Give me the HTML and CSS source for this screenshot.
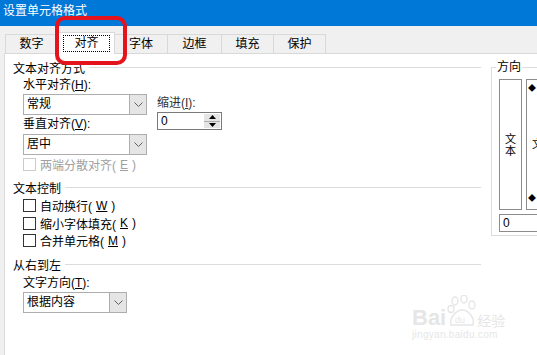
FILE: index.html
```html
<!DOCTYPE html>
<html lang="zh-CN">
<head>
  <meta charset="UTF-8">
  <title>设置单元格格式</title>
  <link rel="stylesheet" href="styles.css">
</head>
<body>
  <div class="dialog">
    <!-- 标题栏 -->
    <div class="titlebar">设置单元格格式</div>

    <!-- 选项卡 -->
    <div class="tabs">
      <div class="tab w53">数字</div>
      <div class="tab active w57"><span class="focus">对齐</span></div>
      <div class="tab w53">字体</div>
      <div class="tab w54">边框</div>
      <div class="tab w52">填充</div>
      <div class="tab w52">保护</div>
    </div>

    <div class="panel">
      <div class="left">
        <div class="section">文本对齐方式</div>
        <div class="align-row">
          <div class="col-main">
            <div class="label">水平对齐(<u>H</u>):</div>
            <div class="combo w124"><span class="combo-text">常规</span><span class="combo-btn"><svg width="9" height="5" viewBox="0 0 9 5"><polyline points="0.5,0.5 4.5,4.5 8.5,0.5" fill="none" stroke="#606060"/></svg></span></div>
            <div class="label">垂直对齐(<u>V</u>):</div>
            <div class="combo w124"><span class="combo-text">居中</span><span class="combo-btn"><svg width="9" height="5" viewBox="0 0 9 5"><polyline points="0.5,0.5 4.5,4.5 8.5,0.5" fill="none" stroke="#606060"/></svg></span></div>
            <div class="check disabled"><span class="box"></span>两端分散对齐(<u>E</u>)</div>
          </div>
          <div class="col-indent">
            <div class="label gray">缩进(<u>I</u>):</div>
            <div class="spin">
              <span class="spin-text">0</span>
              <span class="spin-btns">
                <span class="spin-btn"><svg width="7" height="4" viewBox="0 0 7 4"><polygon points="0,4 3.5,0 7,4" fill="#000"/></svg></span>
                <span class="spin-btn"><svg width="7" height="4" viewBox="0 0 7 4"><polygon points="0,0 3.5,4 7,0" fill="#000"/></svg></span>
              </span>
            </div>
          </div>
        </div>

        <div class="section mt3">文本控制</div>
        <div class="checks">
          <div class="check"><span class="box"></span>自动换行(<u>W</u>)</div>
          <div class="check"><span class="box"></span>缩小字体填充(<u>K</u>)</div>
          <div class="check"><span class="box"></span>合并单元格(<u>M</u>)</div>
        </div>

        <div class="section mt5">从右到左</div>
        <div class="indent">
          <div class="label">文字方向(<u>T</u>):</div>
          <div class="combo w104"><span class="combo-text">根据内容</span><span class="combo-btn"><svg width="9" height="5" viewBox="0 0 9 5"><polyline points="0.5,0.5 4.5,4.5 8.5,0.5" fill="none" stroke="#606060"/></svg></span></div>
        </div>
      </div>

      <fieldset class="orient">
        <legend>方向</legend>
        <div class="orient-boxes">
          <div class="vbox">文<br>本</div>
          <div class="dial">
            <span class="dot top">◆</span>
            <span class="dial-text">文</span>
            <span class="dot bottom">◆</span>
          </div>
        </div>
        <div class="deg">0</div>
      </fieldset>
    </div>

    <!-- 标注 -->
    <div class="mark"></div>

    <!-- 水印 -->
    <div class="watermark">
      <div class="wm-top">
        <span class="wm-bai">Bai</span>
        <span class="wm-paw">
          <svg width="30" height="34" viewBox="0 0 30 34">
            <g fill="none" stroke="#e6e6e6" stroke-width="1.4">
              <ellipse cx="8" cy="6" rx="3" ry="4"/>
              <ellipse cx="17" cy="4" rx="3" ry="4"/>
              <ellipse cx="25" cy="10" rx="3" ry="4"/>
              <ellipse cx="4" cy="14" rx="3" ry="3.5"/>
              <path d="M4 30 C2 22 10 15 15 15 C21 15 28 22 26 30 Z"/>
            </g>
            <text x="8" y="28" font-size="9" fill="#e6e6e6" font-family="Liberation Sans, sans-serif">du</text>
          </svg>
        </span>
        <span class="wm-jy">经验</span>
      </div>
      <div class="wm-url">jingyan.baidu.com</div>
    </div>
  </div>
</body>
</html>
```

FILE: styles.css
```css
* {
  margin: 0;
  padding: 0;
  box-sizing: border-box;
}

body {
  width: 537px;
  height: 355px;
  overflow: hidden;
  font-family: "Liberation Sans", "Noto Sans CJK SC", sans-serif;
  font-size: 12px;
  color: #000;
  background: #f0f0f0;
}

u {
  text-decoration: underline;
}

.dialog {
  position: relative;
  width: 537px;
  height: 355px;
  overflow: hidden;
}

/* 标题栏 */
.titlebar {
  height: 26px;
  background: #0078d7;
  color: #fff;
  padding-left: 3px;
  line-height: 22px;
}

/* 选项卡 */
.tabs {
  display: flex;
  align-items: flex-end;
  height: 27px;
  padding-left: 5px;
  background: #f0f0f0;
}

.tab {
  height: 19px;
  line-height: 18px;
  text-align: center;
  border: 1px solid #d9d9d9;
  border-bottom: none;
  border-left: none;
  background: #f0f0f0;
}

.tab:first-child {
  border-left: 1px solid #d9d9d9;
}

.tab.active {
  height: 22px;
  margin-bottom: -1px;
  background: #fff;
  border-left: 1px solid #d9d9d9;
  position: relative;
  z-index: 1;
  padding-top: 2px;
}

.focus {
  display: block;
  margin: 0 4px;
  height: 17px;
  line-height: 15px;
  border: 1px dotted #000;
}

.w52 { width: 52px; }
.w53 { width: 53px; }
.w54 { width: 54px; }
.w57 { width: 57px; }

/* 面板 */
.panel {
  display: flex;
  gap: 10px;
  height: 302px;
  margin-left: 4px;
  padding: 3px 0 0 8px;
  background: #fff;
  border-top: 1px solid #d9d9d9;
  border-left: 1px solid #d9d9d9;
}

.left {
  width: 468px;
  flex-shrink: 0;
}

.section {
  display: flex;
  align-items: center;
  height: 20px;
  gap: 4px;
}

.section::after {
  content: "";
  flex: 1;
  border-top: 1px solid #dcdcdc;
}

.mt3 { margin-top: 3px; }
.mt5 { margin-top: 5px; }

.align-row {
  display: flex;
  gap: 10px;
  padding-left: 10px;
}

.col-main {
  display: flex;
  flex-direction: column;
}

.col-indent {
  padding-top: 18px;
}

.label {
  height: 17px;
  line-height: 17px;
}

.label.gray {
  color: #333;
}

.col-main .label + .combo + .label {
  height: 19px;
  line-height: 19px;
}

/* 下拉框 */
.combo {
  display: flex;
  height: 21px;
  border: 1px solid #adadad;
  background: #fff;
}

.w124 { width: 124px; }
.w104 { width: 104px; }

.combo-text {
  flex: 1;
  padding-left: 3px;
  line-height: 19px;
}

.combo-btn {
  width: 17px;
  display: flex;
  align-items: center;
  justify-content: center;
  background: #e5e5e5;
  border-left: 1px solid #adadad;
}

/* 微调框 */
.spin {
  display: flex;
  width: 65px;
  height: 18px;
  border: 1px solid #7a7a7a;
  background: #fff;
}

.spin-text {
  flex: 1;
  padding-left: 3px;
  line-height: 16px;
}

.spin-btns {
  width: 16px;
  display: flex;
  flex-direction: column;
  margin: 1px;
}

.spin-btn {
  flex: 1;
  display: flex;
  align-items: center;
  justify-content: center;
  background: #e5e5e5;
}

.spin-btn + .spin-btn {
  border-top: 1px solid #adadad;
}

/* 复选框 */
.check {
  display: flex;
  align-items: center;
  height: 19px;
  gap: 4px;
}

.checks {
  padding-left: 10px;
}

.checks .check {
  height: 17.5px;
}

.box {
  width: 13px;
  height: 13px;
  border: 1px solid #333;
  background: #fff;
}

.check.disabled {
  color: #a0a0a0;
}

.check.disabled .box {
  border-color: #cccccc;
}

.indent {
  padding-left: 10px;
}

/* 方向 */
.orient {
  flex-shrink: 0;
  width: 120px;
  height: 176px;
  margin-top: 3px;
  padding: 5px 0 0 7px;
  border: 1px solid #dcdcdc;
}

.orient legend {
  margin-left: -3px;
  padding: 0 1px;
  line-height: 14px;
}

.orient-boxes {
  display: flex;
  gap: 4px;
  height: 131px;
}

.vbox {
  width: 23px;
  border: 1px solid #8c8c8c;
  display: flex;
  align-items: center;
  justify-content: center;
  text-align: center;
  font-size: 11px;
  line-height: 12px;
}

.dial {
  position: relative;
  width: 100px;
  border: 1px solid #8c8c8c;
}

.dot {
  position: absolute;
  left: 1px;
  font-size: 8px;
  line-height: 8px;
}

.dot.top { top: 5px; }
.dot.bottom { bottom: 6px; }

.dial-text {
  position: absolute;
  left: 5px;
  top: 58px;
  font-size: 11px;
  line-height: 12px;
}

.deg {
  width: 100px;
  height: 18px;
  margin-top: 4px;
  border: 1px solid #8c8c8c;
  padding-left: 3px;
  line-height: 16px;
}

/* 红色标注 */
.mark {
  position: absolute;
  left: 55px;
  top: 16px;
  width: 72px;
  height: 49px;
  border: 4px solid #e5141c;
  border-radius: 10px;
  z-index: 5;
}

/* 水印 */
.watermark {
  position: absolute;
  left: 412px;
  top: 293px;
  color: #e6e6e6;
  font-family: "Liberation Sans", sans-serif;
}

.wm-top {
  display: flex;
  align-items: flex-end;
  height: 36px;
}

.wm-bai {
  font-size: 22px;
  font-weight: bold;
  line-height: 22px;
}

.wm-paw {
  display: flex;
  margin-left: 1px;
}

.wm-jy {
  font-family: "Noto Sans CJK SC", sans-serif;
  font-size: 14px;
  line-height: 18px;
}

.wm-url {
  font-size: 10px;
  line-height: 12px;
  letter-spacing: 0.3px;
}
```
